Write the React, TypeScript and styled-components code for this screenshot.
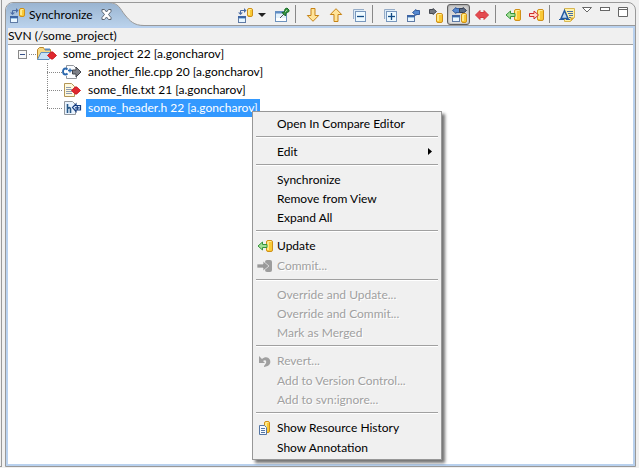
import React from "react";
import styled, { createGlobalStyle } from "styled-components";

const GlobalStyle = createGlobalStyle`
  * { box-sizing: border-box; }
  html, body { margin: 0; padding: 0; }
  body, button {
    font-family: Lato, "Open Sans", sans-serif;
    font-size: 12px;
    line-height: 16px;
    color: #000;
  }
  button { margin: 0; padding: 0; border: 0; background: none; text-align: left; }
  svg { display: block; flex: none; overflow: visible; }
`;

const Workbench = styled.div`
  display: flex;
  gap: 3px;
  height: 100vh;
  padding: 0 3px 1px 0;
  background: #f0f0f0;
  overflow: hidden;
`;

const NeighbourEdge = styled.div`
  width: 2px;
  border-right: 1px solid #999;
  border-bottom: 1px solid #999;
`;

const View = styled.section`
  flex: 1;
  min-width: 0;
  display: flex;
  flex-direction: column;
  margin-top: 2px;
  border: 1px solid #999;
  border-radius: 8px 8px 0 0;
`;

const TitleBar = styled.header`
  display: flex;
  height: 23px;
  border-bottom: 1px solid #999;
`;

const Tab = styled.div`
  display: flex;
  align-items: center;
  height: 23px;
  padding-left: 3px;
  border-radius: 7px 0 0 0;
  background: linear-gradient(#99b4d1, #b9d1ea);
`;

const TabLabel = styled.button`
  display: flex;
  align-items: center;
  gap: 4px;
  height: 22px;
`;

const CloseButton = styled.button`
  position: relative;
  z-index: 1;
  margin-left: 8px;
`;

const TabEnd = styled.svg`
  margin-left: -10px;
`;

const Toolbar = styled.div`
  display: flex;
  align-items: flex-start;
  margin-left: auto;
  padding: 1px 3px 0 0;
`;

const ToolButton = styled.button<{ $pressed?: boolean }>`
  display: flex;
  align-items: center;
  justify-content: center;
  width: 23px;
  height: 21px;
  border: 1px solid ${(p) => (p.$pressed ? "#5f5f5f" : "transparent")};
  border-radius: 3px;
  background: ${(p) => (p.$pressed ? "linear-gradient(#c8c8c8, #e6e6e6)" : "none")};
  box-shadow: ${(p) => (p.$pressed ? "inset 0 0 2px #777" : "none")};
`;

const DropButton = styled.button`
  display: flex;
  align-items: center;
  width: 14px;
  height: 21px;
  padding-left: 2px;
`;

const ToolSeparator = styled.span`
  width: 1px;
  height: 18px;
  margin: 1px 5px 0 2px;
  background: #888;
`;

const ViewControl = styled.button`
  display: flex;
  justify-content: center;
  width: 18px;
  height: 21px;
  padding-top: 3px;
`;

const Body = styled.div`
  flex: 1;
  min-height: 0;
  display: flex;
  flex-direction: column;
  border: 2px solid #b9d1ee;
  background: #fff;
`;

const ScopeLine = styled.div`
  height: 17px;
  border-bottom: 1px solid #a0a0a0;
  background: #f0f0f0;
`;

const Tree = styled.ul`
  margin: 0;
  padding: 0;
  list-style: none;
`;

const Row = styled.div<{ $level: number }>`
  display: flex;
  align-items: center;
  height: 18px;
  padding-left: ${(p) => (p.$level ? 39 : 10)}px;
`;

const Expander = styled.button`
  margin-right: 2px;
`;

const Stub = styled.span<{ $wide?: boolean }>`
  width: ${(p) => (p.$wide ? 15 : 7)}px;
  border-top: 1px dotted #888;
`;

const Children = styled(Tree)`
  background: repeating-linear-gradient(#888 0 1px, transparent 1px 2px) 39px 0 / 1px 46px no-repeat;
`;

const NodeLabel = styled.span<{ $selected?: boolean }>`
  height: 18px;
  padding: 0 2px;
  line-height: 18px;
  margin-left: 4px;
  white-space: nowrap;
  color: ${(p) => (p.$selected ? "#fff" : "#000")};
  background: ${(p) => (p.$selected ? "#3399ff" : "none")};
`;

const Menu = styled.div`
  position: absolute;
  left: 252px;
  top: 111px;
  width: 190px;
  padding: 2px;
  border: 1px solid #979797;
  background: #f0f0f0;
  box-shadow: 3px 3px 3px rgba(0, 0, 0, 0.55);
`;

const MenuItem = styled.button<{ $tall: boolean }>`
  display: flex;
  align-items: center;
  width: 100%;
  height: ${(p) => (p.$tall ? 20 : 19)}px;
  padding-right: 7px;
  white-space: nowrap;
  &:disabled { color: #a0a0a0; text-shadow: 1px 1px #fff; }
`;

const MenuIcon = styled.span`
  width: 22px;
  padding-left: 2px;
  flex: none;
`;

const MenuText = styled.span`
  flex: 1;
`;

const MenuRule = styled.hr`
  height: 2px;
  margin: 3px 1px 4px;
  border: 0;
  border-top: 1px solid #a0a0a0;
  background: #fff;
`;

type P = { x?: number; y?: number };

const Svg = ({ w = 16, h = 16, children }: { w?: number; h?: number; children: React.ReactNode }) => (
  <svg width={w} height={h} viewBox={`0 0 ${w} ${h}`} aria-hidden="true">{children}</svg>
);

const Cylinder = ({ x = 0, y = 0, h = 9, w = 6 }: P & { h?: number; w?: number }) => (
  <g transform={`translate(${x} ${y})`}>
    <rect x=".5" y=".5" width={w - 1} height={h - 1} rx="1.5" fill="#f9c936" stroke="#cf9018" />
    <path d={`M2 2v${h - 4}`} stroke="#fff3a5" strokeWidth="1.5" />
    <path d={`M1.5 1.5h${w - 3}`} stroke="#ffeb91" />
  </g>
);

const MiniWindow = ({ x = 0, y = 0, w = 8, h = 7 }: P & { w?: number; h?: number }) => (
  <g transform={`translate(${x} ${y})`}>
    <rect x=".5" y=".5" width={w - 1} height={h - 1} fill="#e9f6ff" stroke="#5f7ba6" />
    <path d={`M0 1h${w}`} stroke="#3e65a4" strokeWidth="2" />
    <path d={`M1 2.5h${w - 2}`} stroke="#9ac6ea" />
  </g>
);

const ArrowLeft = ({ x = 0, y = 0, fill, stroke }: P & { fill: string; stroke: string }) => (
  <path transform={`translate(${x} ${y})`} d="M.5 3.500 4 .5V1.500h3.500v4H4v1z" fill={fill} stroke={stroke} />
);

const ArrowRight = ({ x = 0, y = 0, fill, stroke }: P & { fill: string; stroke: string }) => (
  <path transform={`translate(${x} ${y})`} d="M7.500 3.500 4 .5V1.500H.5v4H4v1z" fill={fill} stroke={stroke} />
);

const Conflict = ({ x = 0, y = 0 }: P) => (
  <path transform={`translate(${x} ${y})`} d="M.5 4.500 4.500 .8V2.500h1V.8l4 3.700-4 3.700V6.500h-1v1.700z" fill="#e0282e" stroke="#d21f26" />
);

const SyncIcon = () => (
  <Svg>
    <path d="M3.500 6V3.500H7" fill="none" stroke="#4b6ca5" />
    <path d="M1 5.500h5L3.500 8zM7 1v5l2.500-2.500z" fill="#4b6ca5" />
    <MiniWindow x={1} y={9} />
    <Cylinder x={10} y={1} />
  </Svg>
);

const PinIcon = () => (
  <Svg>
    <rect x="1.500" y="4.500" width="11" height="10" fill="#e4f2fc" stroke="#6d92bd" />
    <path d="M1 5.500h12" stroke="#5f8cc4" strokeWidth="2" />
    <path d="M2 12.500h10" stroke="#fff" strokeWidth="3" />
    <path d="m6 11 4-4" stroke="#555" />
    <path d="m8 5.500 3.500 3.500.5-3 3-1.500V3L13 1 11 2l-.5 3z" fill="#3b9b43" stroke="#176a25" />
    <path d="m11 5 2-2" stroke="#9ed7a1" />
  </Svg>
);

const DownIcon = ({ up }: { up?: boolean }) => (
  <Svg>
    <path
      transform={up ? "rotate(180 8 8)" : undefined}
      d="M6 1.500h4v7h3.700L8 14.300 2.300 8.500H6z"
      fill="#ffe49a" stroke="#c78315" strokeLinejoin="round"
    />
  </Svg>
);

const StackIcon = ({ plus }: { plus?: boolean }) => (
  <Svg>
    <path d="M2.500 12V2.500H13" fill="none" stroke="#96adc8" />
    <path d="M3 3h10v2H5v7H3z" fill="#dcebf7" />
    <rect x="4.500" y="4.500" width="10" height="10" fill="#eefaff" stroke="#7897bd" />
    <path d="M6 9.500h7" stroke="#134b85" strokeWidth="1.300" />
    {plus && <path d="M9.500 6v7" stroke="#134b85" strokeWidth="1.300" />}
  </Svg>
);

const IncomingIcon = () => (
  <Svg>
    <ArrowLeft x={7} y={2} fill="#5489d2" stroke="#365d9d" />
    <MiniWindow x={2} y={8} />
  </Svg>
);

const OutgoingIcon = () => (
  <Svg>
    <ArrowRight x={1} y={1} fill="#737780" stroke="#454951" />
    <Cylinder x={8} y={6} w={7} h={10} />
  </Svg>
);

const BothIcon = () => (
  <Svg>
    <ArrowLeft x={1} fill="#5489d2" stroke="#365d9d" />
    <ArrowRight x={8} fill="#596b86" stroke="#353f53" />
    <MiniWindow x={1} y={8} />
    <Cylinder x={10} y={6} w={6} h={10} />
  </Svg>
);

const ConflictIcon = () => (
  <Svg>
    <path d="M1.500 8 6 3.500v2h4v-2L14.500 8 10 12.500v-2H6v2z" fill="#e34b50" stroke="#d6383e" strokeLinejoin="round" />
  </Svg>
);

const UpdateIcon = () => (
  <Svg>
    <Cylinder x={9} y={2} w={7} h={12} />
    <path d="M1 8 5.500 4v2.500H10v3H5.500V12z" fill="#a2df96" stroke="#36943b" />
  </Svg>
);

const CommitIcon = ({ grey }: { grey?: boolean }) => (
  <Svg>
    {grey ? (
      <>
        <rect x="8" y="2" width="7" height="12" rx="2" fill="#9d9d9d" />
        <path d="M0 6h6V3l6 5-6 5v-3H0z" fill="#999" stroke="#f0f0f0" strokeWidth=".7" />
      </>
    ) : (
      <>
        <Cylinder x={9} y={2} w={7} h={12} />
        <path d="M1.500 6.500H6V4l4.500 4L6 12V9.500H1.500z" fill="#ffd8ca" stroke="#d12b2b" />
      </>
    )}
  </Svg>
);

const AnnotateIcon = () => (
  <Svg>
    <path d="M5.500 1.500h10v9l-4 4h-6z" fill="#fff3a8" stroke="#d8b650" />
    <path d="M8 4.500h6M9 6.500h5M10 8.500h4M10 10.500h2" stroke="#486ea4" />
    <path d="m11.500 14.500 4-4h-4z" fill="#d8a733" />
    <path d="m2 11.500 3.500-8 3.500 8z" fill="#bfd8ef" stroke="#245b9f" strokeWidth="1.500" />
    <path d="M0 12.500h5m2 0h4" stroke="#245b9f" />
  </Svg>
);

const FolderIcon = () => (
  <Svg w={21}>
    <path d="M1.500 13.500v-10l2-2h4l1 2h6v3" fill="#f8d982" stroke="#b9872f" />
    <path d="M9 3.500h5" stroke="#5888bd" strokeWidth="2" />
    <path d="M1.500 13.500 5 6.500h12l-4 7z" fill="#c9e3f6" stroke="#6291c0" />
    <Conflict x={11} y={5} />
  </Svg>
);

const CppIcon = () => (
  <Svg w={20}>
    <path d="M4.500 1.500h7l3 3v10h-10z" fill="#fafcff" stroke="#93979d" />
    <path d="M0 4h7v8H0z" fill="#fff" />
    <path d="M5.500 5.500Q4.500 4.500 3.500 4.500 1 4.500 1 7.500T3.500 10.500q1 0 2-1" fill="none" stroke="#2a67ad" strokeWidth="1.800" />
    <path d="M6 6.500h4M8 4.500v4" stroke="#2a67ad" strokeWidth="1.300" />
    <path d="M10.500 6H14V3l5 5-5 5v-3h-3.500z" fill="#7d8088" stroke="#41444b" />
  </Svg>
);

const TextIcon = () => (
  <Svg w={20}>
    <path d="M2.500 1.500h7l3 3v10h-10z" fill="#fff9dc" stroke="#b39556" />
    <path d="M4 5.500h5M4 7.500h6M4 9.500h6M4 11.500h6" stroke="#8d9bb1" />
    <Conflict x={9} y={4} />
  </Svg>
);

const HeaderIcon = () => (
  <Svg w={20}>
    <path d="M2.500 1.500h8l3 3v10h-11z" fill="#e8f2fd" stroke="#93979d" />
    <path d="M5.500 4v9M5.500 8.500q3-2 3 .8V13" fill="none" stroke="#275888" strokeWidth="1.600" />
    <path d="M10.500 7.500 14 4v1.500h4.500v4.500H14v1.500z" fill="#dceaff" stroke="#173e80" strokeWidth="1.200" />
    <path d="M13 7.800h4.500M15.300 5.500v4.500" stroke="#173e80" strokeWidth="1.200" />
  </Svg>
);

const RevertIcon = () => (
  <Svg>
    <path d="M2 3v7h6L6 8c3-2 5 1 1 5v1c6-1 7-4 6-7-1-3-5-4-8-1z" fill="#a0a0a0" />
  </Svg>
);

const HistoryIcon = () => (
  <Svg>
    <Cylinder x={7} y={1} w={6} h={12} />
    <path d="M2.500 5.500h5l2 2v7h-7z" fill="#f6faff" stroke="#5576a4" />
    <path d="M4 8.500h4M4 10.500h4M4 12.500h4" stroke="#5576a4" />
  </Svg>
);

type Entry = { label: string; icon?: React.ReactNode; disabled?: boolean; submenu?: boolean };

const groups: Entry[][] = [
  [{ label: "Open In Compare Editor" }],
  [{ label: "Edit", submenu: true }],
  [{ label: "Synchronize" }, { label: "Remove from View" }, { label: "Expand All" }],
  [{ label: "Update", icon: <UpdateIcon /> }, { label: "Commit...", icon: <CommitIcon grey />, disabled: true }],
  [
    { label: "Override and Update...", disabled: true },
    { label: "Override and Commit...", disabled: true },
    { label: "Mark as Merged", disabled: true },
  ],
  [
    { label: "Revert...", icon: <RevertIcon />, disabled: true },
    { label: "Add to Version Control...", disabled: true },
    { label: "Add to svn:ignore...", disabled: true },
  ],
  [{ label: "Show Resource History", icon: <HistoryIcon /> }, { label: "Show Annotation" }],
];

const files = [
  { label: "another_file.cpp 20 [a.goncharov]", icon: <CppIcon /> },
  { label: "some_file.txt 21 [a.goncharov]", icon: <TextIcon /> },
  { label: "some_header.h 22 [a.goncharov]", icon: <HeaderIcon />, selected: true },
];

const Tool = ({ name, pressed, children }: { name: string; pressed?: boolean; children: React.ReactNode }) => (
  <ToolButton type="button" aria-label={name} aria-pressed={pressed} $pressed={pressed}>{children}</ToolButton>
);

export default function App() {
  return (
    <>
      <GlobalStyle />
      <Workbench>
        <NeighbourEdge />
        <View>
          <TitleBar>
            <Tab>
              <TabLabel type="button"><SyncIcon />Synchronize</TabLabel>
              <CloseButton type="button" aria-label="Close">
                <Svg w={11} h={11}>
                  <path d="M1 .5h2.500l2 2.500 2-2.500H10v2L7.500 5.500 10 8.500v2H7.500l-2-2.500-2 2.500H1v-2l2.500-3L1 2.500z" fill="#fff" stroke="#5c6570" />
                </Svg>
              </CloseButton>
            </Tab>
            <TabEnd width="42" height="23" viewBox="0 0 42 23" aria-hidden="true">
              <defs>
                <linearGradient id="tab" x1="0" y1="0" x2="0" y2="1">
                  <stop stopColor="#99b4d1" /><stop offset="1" stopColor="#b9d1ea" />
                </linearGradient>
              </defs>
              <path d="M0 0H6C17 0 18 6 23 12S32 22.500 42 22.500V23H0z" fill="url(#tab)" />
              <path d="M6 -.5C17 -.5 18 6 23 12S32 22.500 42 22.500" fill="none" stroke="#999" />
            </TabEnd>
            <Toolbar role="toolbar">
              <Tool name="Synchronize"><SyncIcon /></Tool>
              <DropButton type="button" aria-label="Synchronize history">
                <Svg w={8} h={4}><path d="M0 0h8L4 4z" fill="#222" /></Svg>
              </DropButton>
              <Tool name="Pin"><PinIcon /></Tool>
              <ToolSeparator />
              <Tool name="Next difference"><DownIcon /></Tool>
              <Tool name="Previous difference"><DownIcon up /></Tool>
              <Tool name="Collapse all"><StackIcon /></Tool>
              <ToolSeparator />
              <Tool name="Expand all"><StackIcon plus /></Tool>
              <Tool name="Incoming mode"><IncomingIcon /></Tool>
              <Tool name="Outgoing mode"><OutgoingIcon /></Tool>
              <Tool name="Incoming and outgoing mode" pressed><BothIcon /></Tool>
              <Tool name="Conflicts mode"><ConflictIcon /></Tool>
              <ToolSeparator />
              <Tool name="Update all"><UpdateIcon /></Tool>
              <Tool name="Commit all"><CommitIcon /></Tool>
              <ToolSeparator />
              <Tool name="Change sets"><AnnotateIcon /></Tool>
              <ViewControl type="button" aria-label="View menu">
                <Svg w={10} h={6}><path d="M.5 .5h9L5 5z" fill="#fff" stroke="#666" /></Svg>
              </ViewControl>
              <ViewControl type="button" aria-label="Minimize">
                <Svg w={10} h={4}><rect x=".5" y=".5" width="9" height="3" fill="#fff" stroke="#666" /></Svg>
              </ViewControl>
              <ViewControl type="button" aria-label="Maximize">
                <Svg w={10} h={10}><path d="M.5 .5h9v9h-9zM.5 2.500h9" fill="#fff" stroke="#666" /></Svg>
              </ViewControl>
            </Toolbar>
          </TitleBar>
          <Body>
            <ScopeLine>SVN (/some_project)</ScopeLine>
            <Tree role="tree">
              <li role="treeitem" aria-expanded="true">
                <Row $level={0}>
                  <Expander type="button" aria-label="Collapse">
                    <Svg w={9} h={9}>
                      <rect x=".5" y=".5" width="8" height="8" fill="#f8f8f8" stroke="#888" />
                      <path d="M2 4.500h5" stroke="#35518a" />
                    </Svg>
                  </Expander>
                  <Stub />
                  <FolderIcon />
                  <NodeLabel>some_project 22 [a.goncharov]</NodeLabel>
                </Row>
                <Children role="group">
                  {files.map((f) => (
                    <li key={f.label} role="treeitem" aria-selected={!!f.selected}>
                      <Row $level={1}>
                        <Stub $wide />
                        {f.icon}
                        <NodeLabel $selected={f.selected}>{f.label}</NodeLabel>
                      </Row>
                    </li>
                  ))}
                </Children>
              </li>
            </Tree>
          </Body>
        </View>
      </Workbench>
      <Menu role="menu">
        {groups.map((group, i) => (
          <React.Fragment key={i}>
            {i > 0 && <MenuRule />}
            {group.map((item) => (
              <MenuItem key={item.label} type="button" role="menuitem" disabled={item.disabled} $tall={!!item.icon}>
                <MenuIcon>{item.icon}</MenuIcon>
                <MenuText>{item.label}</MenuText>
                {item.submenu && <Svg w={4} h={7}><path d="M0 0v7l4-3.500z" /></Svg>}
              </MenuItem>
            ))}
          </React.Fragment>
        ))}
      </Menu>
    </>
  );
}
